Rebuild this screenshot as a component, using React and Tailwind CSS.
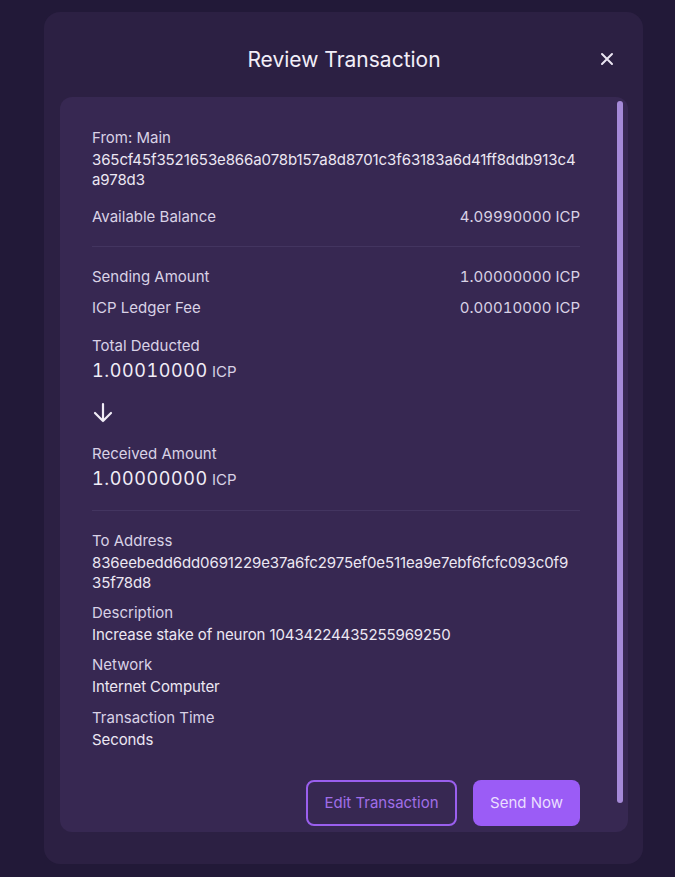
import React from 'react'

const Row = ({ label, value }) => (
  <div className='flex justify-between items-center leading-5'>
    <span className='text-[#d9d2e6]'>{label}</span>
    <span className='text-[#d9d2e6] tabular-nums'>{value}</span>
  </div>
)

const Field = ({ label, value, className = '' }) => (
  <div className={className}>
    <div className='leading-5 text-[#d9d2e6]'>{label}</div>
    <div className='leading-5 mt-[2px] text-[#ece7f3] break-all whitespace-pre-line tracking-[-0.1px]'>{value}</div>
  </div>
)

const Big = ({ amount }) => (
  <div className='mt-[2px] leading-[25px]'>
    <span className='text-[18px] text-[#f1edf7] tabular-nums tracking-[0.6px]'>{amount}</span>
    <span className='text-[15px] text-[#d9d2e6] ml-1'>ICP</span>
  </div>
)

const App = () => {
  return (
    <div className='min-h-screen bg-[#221938] pt-3 pl-[44px] pr-8' style={{ fontFamily: 'Inter, "Noto Sans", sans-serif' }}>
      <div className='w-[599px] h-[852px] bg-[#2c2043] rounded-2xl flex flex-col pl-4 pr-[15px]'>

        <div className='relative h-[85px] flex justify-center items-center'>
          <span className='text-[21px] text-[#f2eef8] mt-[10px]'>Review Transaction</span>
          <button className='absolute right-[14px] top-[40px] text-[#eae5f2]'>
            <svg width='14' height='14' viewBox='0 0 14 14' fill='none' stroke='currentColor' strokeWidth='2' strokeLinecap='round'>
              <path d='M2 2 L12 12 M12 2 L2 12' />
            </svg>
          </button>
        </div>

        <div className='h-[735px] bg-[#372852] rounded-xl flex overflow-hidden'>
          <div className='flex-1 pl-8 pr-[37px] pt-[31px] text-[15px]'>

            <Field label='From: Main' value={'365cf45f3521653e866a078b157a8d8701c3f63183a6d41ff8ddb913c4\na978d3'} />
            <div className='mt-[17px]'>
              <Row label='Available Balance' value='4.09990000 ICP' />
            </div>

            <div className='h-px bg-[#433560] mt-[19px]'></div>

            <div className='mt-5'>
              <Row label='Sending Amount' value='1.00000000 ICP' />
            </div>
            <div className='mt-[11px]'>
              <Row label='ICP Ledger Fee' value='0.00010000 ICP' />
            </div>

            <div className='mt-[18px]'>
              <div className='leading-5 text-[#d9d2e6]'>Total Deducted</div>
              <Big amount='1.00010000' />
            </div>

            <div className='mt-[18px] h-[20px] text-[#f1edf7]'>
              <svg width='22' height='22' viewBox='0 0 22 22' fill='none' stroke='currentColor' strokeWidth='2.2' strokeLinecap='round' strokeLinejoin='round'>
                <path d='M11 2 V19 M3 11 L11 19 L19 11' />
              </svg>
            </div>

            <div className='mt-[22px]'>
              <div className='leading-5 text-[#d9d2e6]'>Received Amount</div>
              <Big amount='1.00000000' />
            </div>

            <div className='h-px bg-[#433560] mt-[18px]'></div>

            <Field className='mt-5' label='To Address' value={'836eebedd6dd0691229e37a6fc2975ef0e511ea9e7ebf6fcfc093c0f9\n35f78d8'} />
            <Field className='mt-[10px]' label='Description' value='Increase stake of neuron 10434224435255969250' />
            <Field className='mt-[10px]' label='Network' value='Internet Computer' />
            <Field className='mt-[11px]' label='Transaction Time' value='Seconds' />

            <div className='flex justify-end gap-4 mt-[30px]'>
              <button className='h-[46px] w-[151px] rounded-lg border-2 border-[#9a5fee] text-[#a06ee8] text-[15px]'>Edit Transaction</button>
              <button className='h-[46px] w-[107px] rounded-lg bg-[#9b5cf6] text-[#eadfff] text-[15px]'>Send Now</button>
            </div>
          </div>

          <div className='w-[6px] h-[702px] mt-1 mr-[5px] rounded-full bg-[#a58ad8]'></div>
        </div>

      </div>
    </div>
  )
}

export default App
